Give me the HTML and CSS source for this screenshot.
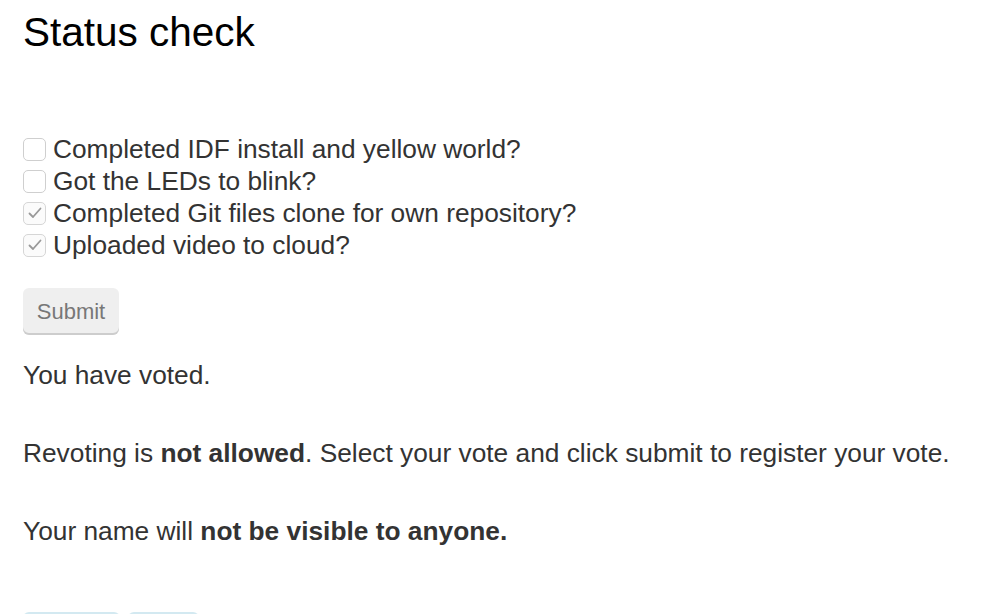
FILE: index.html
```html
<!DOCTYPE html>
<html>
<head>
<meta charset="utf-8">
<link rel="stylesheet" href="styles.css">
</head>
<body>
<main class="page">
  <h1 class="title">Status check</h1>
  <form class="poll">
    <ul class="options">
      <li class="option"><span class="box"></span><span class="label">Completed IDF install and yellow world?</span></li>
      <li class="option"><span class="box"></span><span class="label">Got the LEDs to blink?</span></li>
      <li class="option"><span class="box checked"><svg viewBox="0 0 22 22" width="22" height="22"><polyline points="5.5,11.5 9,15 16.5,6.5" fill="none" stroke="#999" stroke-width="1.8" stroke-linecap="round" stroke-linejoin="round"/></svg></span><span class="label">Completed Git files clone for own repository?</span></li>
      <li class="option"><span class="box checked"><svg viewBox="0 0 22 22" width="22" height="22"><polyline points="5.5,11.5 9,15 16.5,6.5" fill="none" stroke="#999" stroke-width="1.8" stroke-linecap="round" stroke-linejoin="round"/></svg></span><span class="label">Uploaded video to cloud?</span></li>
    </ul>
    <button type="button" class="submit">Submit</button>
  </form>
  <p class="msg">You have voted.</p>
  <p class="msg">Revoting is <strong>not allowed</strong>. Select your vote and click submit to register your vote.</p>
  <p class="msg">Your name will <strong>not be visible to anyone.</strong></p>
  <div class="actions">
    <span class="pill pill-wide"></span>
    <span class="pill pill-narrow"></span>
  </div>
</main>
</body>
</html>
```
FILE: styles.css
```css
html, body {
  margin: 0;
  padding: 0;
  background: #fff;
}
body {
  font-family: "Liberation Sans", Arial, Helvetica, sans-serif;
  color: #333;
}
.page {
  padding: 8px 0 0 23px;
}
.title {
  margin: 0;
  font-size: 40.5px;
  line-height: 48px;
  font-weight: normal;
  color: #000;
}
.poll {
  margin: 77px 0 0 0;
}
.options {
  list-style: none;
  margin: 0;
  padding: 0;
}
.option {
  display: flex;
  align-items: center;
  gap: 7px;
  height: 32px;
  font-size: 26.3px;
  line-height: 32px;
}
.box {
  width: 23px;
  height: 23px;
  box-sizing: border-box;
  border: 1px solid #cfcfcf;
  border-radius: 5px;
  background: #fff;
  display: flex;
  align-items: center;
  justify-content: center;
  flex: none;
}
.box svg {
  display: block;
  margin: -1px;
}
.box.checked {
  border-color: #d6d6d6;
  background: #fbfbfb;
}
.submit {
  display: block;
  margin-top: 27px;
  width: 96px;
  height: 47px;
  padding: 0;
  border: none;
  border-radius: 6px;
  background: #efefef;
  box-shadow: inset 0 -2px 0 #cdcdcd;
  font-family: "Liberation Sans", Arial, Helvetica, sans-serif;
  font-size: 22px;
  color: #777;
}
.msg {
  margin: 0;
  font-size: 26.3px;
  line-height: 37px;
}
.poll + .msg {
  margin-top: 22px;
}
.msg + .msg {
  margin-top: 41px;
}
.actions {
  display: flex;
  gap: 8px;
  margin-top: 62px;
}
.pill {
  display: block;
  height: 30px;
  border-radius: 6px;
  background: #d3e9f1;
}
.pill-wide { width: 97px; }
.pill-narrow { width: 71px; }
```
